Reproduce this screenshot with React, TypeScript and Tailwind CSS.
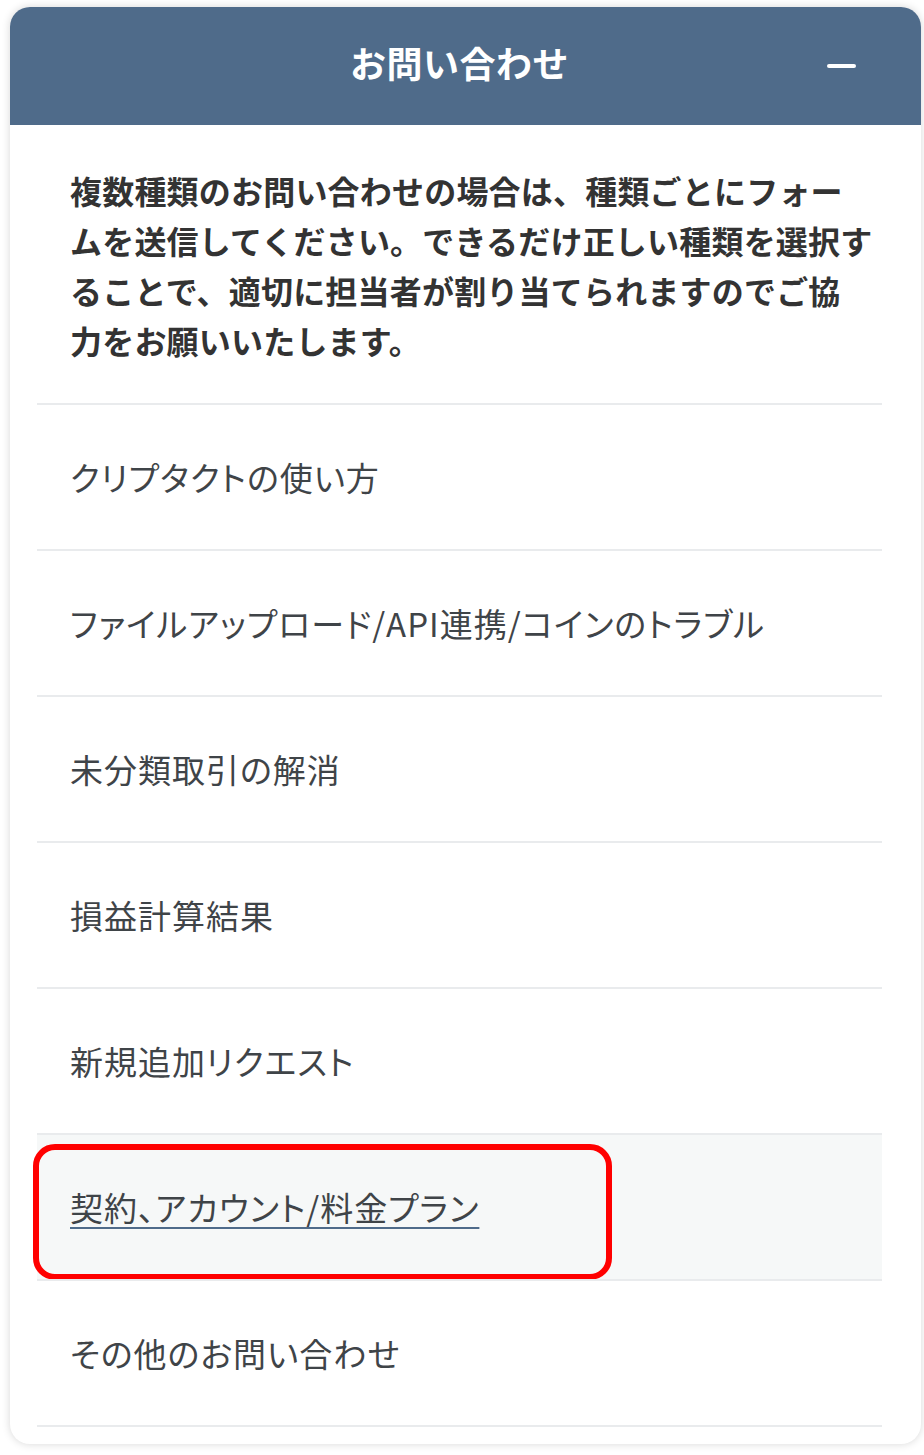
const items = [
  "クリプタクトの使い方",
  "ファイルアップロード/API連携/コインのトラブル",
  "未分類取引の解消",
  "損益計算結果",
  "新規追加リクエスト",
  "契約、アカウント/料金プラン",
  "その他のお問い合わせ",
];

const HIGHLIGHT = "契約、アカウント/料金プラン";

const font = { fontFamily: '"Noto Sans CJK JP", "Noto Sans", sans-serif' };

export default function App() {
  return (
    <div className="min-h-screen bg-white pt-[7px] pb-[10px]" style={font}>
      <div className="ml-[10px] w-[911px] rounded-[20px] bg-white shadow-[0_0_8px_rgba(0,0,0,0.16)] overflow-hidden">
        {/* header */}
        <div className="relative flex h-[118px] items-center justify-center bg-[#4f6b8a] pr-[12px]">
          <h2 className="mb-[8px] text-[36px] font-bold leading-none tracking-[0.5px] text-white">お問い合わせ</h2>
          <span className="absolute right-[65px] top-[57px] h-[4px] w-[29px] rounded-full bg-white" />
        </div>

        {/* description */}
        <p className="px-[60px] pt-[40px] pb-[38px] text-[32px] font-semibold leading-[50px] tracking-[0.2px] text-[#333] whitespace-nowrap">
          複数種類のお問い合わせの場合は、種類ごとにフォー
          <br />
          ムを送信してください。できるだけ正しい種類を選択す
          <br />
          ることで、適切に担当者が割り当てられますのでご協
          <br />
          力をお願いいたします。
        </p>

        {/* list */}
        <ul className="ml-[27px] mr-[39px] mb-[17px] border-b-2 border-[#e9ebed]">
          {items.map((label) => {
            const active = label === HIGHLIGHT;
            return (
              <li
                key={label}
                className={`relative flex h-[146px] items-center border-t-2 border-[#e9ebed] pl-[33px] ${
                  active ? "bg-[#f6f8f8]" : ""
                }`}
              >
                <span
                  className={`text-[33px] leading-none tracking-[1px] text-[#3f4448] [font-feature-settings:"palt"] ${
                    active ? "underline decoration-[#4f6b8a] decoration-2 underline-offset-[6px]" : ""
                  }`}
                >
                  {label}
                </span>
                {active && (
                  <span className="absolute left-[-4px] top-[9px] h-[136px] w-[579px] rounded-[22px] border-[6px] border-[#ff0000]" />
                )}
              </li>
            );
          })}
        </ul>
      </div>
    </div>
  );
}
